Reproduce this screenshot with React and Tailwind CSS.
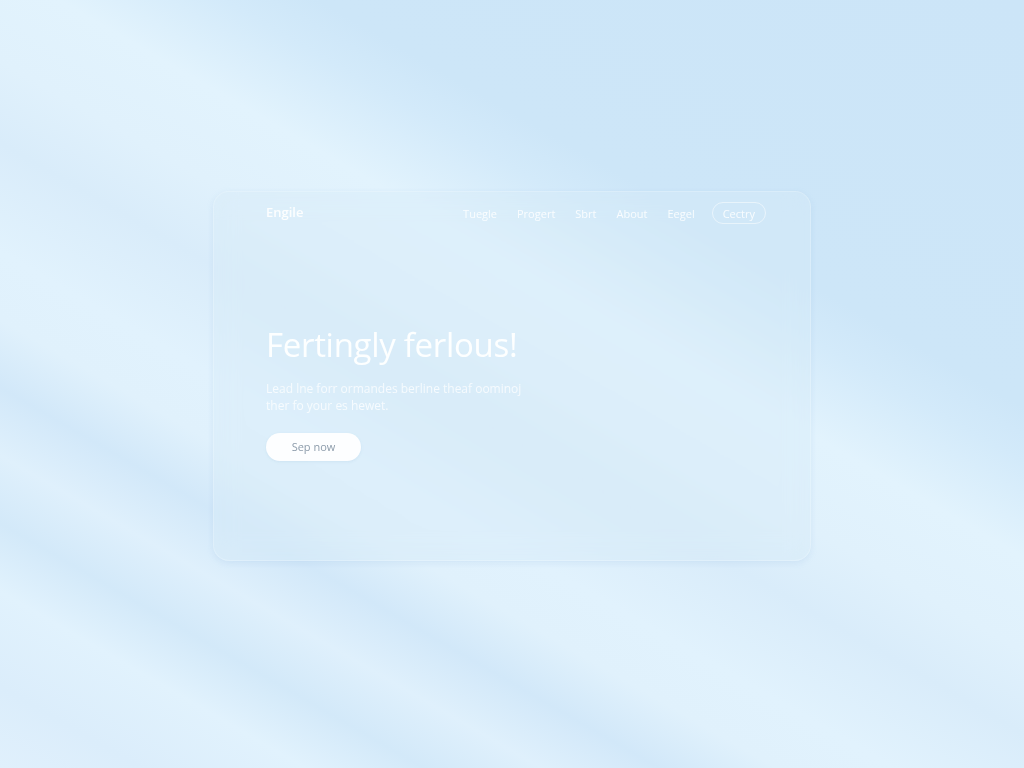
import React from 'react';

const navLinks = ['Tuegle', 'Progert', 'Sbrt', 'About', 'Eegel'];

// soft diagonal light streaks behind the glass card
const sky =
  'bg-[linear-gradient(210deg,#cce5f8_0%,#cde6f8_30%,#d3eafa_34%,#e2f3fd_41%,#e0f1fc_48%,#d9ecfa_54%,#e1f2fd_62%,#e0f1fc_67%,#d2e8f9_72%,#dff0fc_77%,#d3e9f9_82%,#e1f2fd_87%,#dbedfb_94%,#e0f0fc_100%)]';

function NavBar() {
  return (
    <header className="flex items-center justify-between pl-[52px] pr-[44px] pt-[10px]">
      <span className="text-[13px] font-semibold text-white/90">Engile</span>
      <nav className="flex items-center gap-[20px] text-[11px] text-white/85">
        {navLinks.map((link) => (
          <a key={link} href="#" className="leading-none">
            {link}
          </a>
        ))}
        <a
          href="#"
          className="-ml-[3px] flex h-[22px] items-center rounded-full border border-white/50 px-[10px] leading-none"
        >
          Cectry
        </a>
      </nav>
    </header>
  );
}

function Hero() {
  return (
    <section className="pl-[52px] pt-[101px]">
      <h1 className="text-[33px] font-normal leading-[40px] tracking-[-0.3px] text-white/95">
        Fertingly ferlous!
      </h1>
      <p className="mt-[15px] w-[270px] text-[12px] leading-[17px] text-white/75">
        Lead lne forr ormandes berline theaf oominoj
        <br />
        ther fo your es hewet.
      </p>
      <button className="mt-[19px] flex h-[28px] w-[95px] items-center justify-center rounded-full bg-[#fdfeff] text-[11px] text-[#8d9cab] shadow-[0_1px_3px_rgba(120,160,200,0.15)]">
        Sep now
      </button>
    </section>
  );
}

export default function App() {
  return (
    <div
      className={`flex h-screen w-full items-center justify-center pb-4 ${sky}`}
      style={{ fontFamily: '"Open Sans", "Noto Sans", sans-serif' }}
    >
      <div className="h-[370px] w-[598px] rounded-[16px] border border-white/20 bg-[#d8eaf8]/40 shadow-[0_2px_6px_rgba(140,180,220,0.18)] backdrop-blur-md">
        <NavBar />
        <Hero />
      </div>
    </div>
  );
}
